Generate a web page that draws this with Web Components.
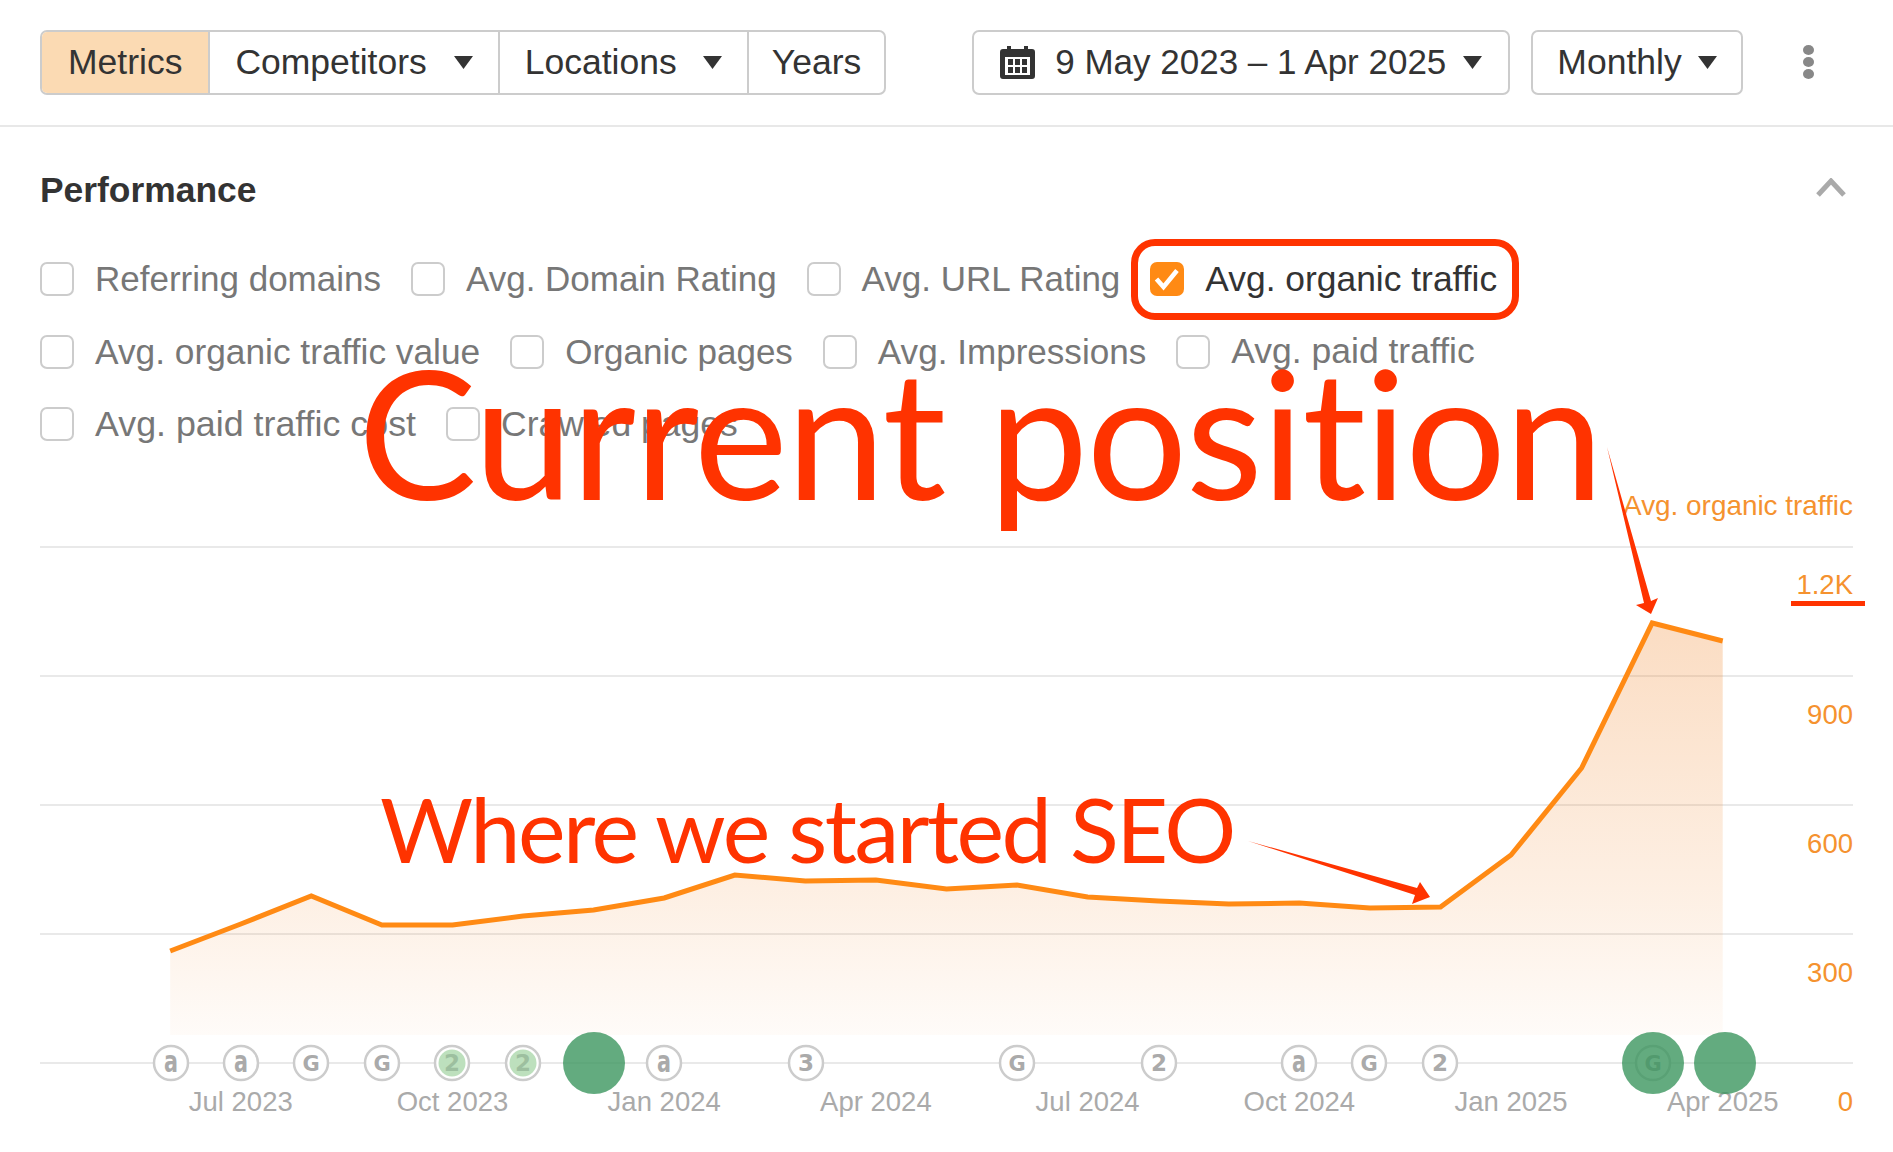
<!DOCTYPE html>
<html>
<head>
<meta charset="utf-8">
<title>Performance</title>
<style>
  html, body { margin: 0; background: #fff; }
  body { font-family: "Liberation Sans", Arial, sans-serif; color: #333; width: 1893px; height: 1152px; overflow: hidden; position: relative; }
</style>
</head>
<body>
<report-page>
  <top-bar slot="bar">
    <seg-group>
      <seg-btn active>Metrics</seg-btn>
      <seg-btn caret pad="25" gap="27">Competitors</seg-btn>
      <seg-btn caret pad="25">Locations</seg-btn>
      <seg-btn pad="23">Years</seg-btn>
    </seg-group>
    <seg-group class="date">
      <seg-btn caret calendar gap="17" size="35">9 May 2023 – 1 Apr 2025</seg-btn>
    </seg-group>
    <seg-group class="period">
      <seg-btn caret gap="16" pad="24">Monthly</seg-btn>
    </seg-group>
    <more-dots></more-dots>
  </top-bar>
  <perf-panel slot="panel" title="Performance">
    <metric-check size="35">Referring domains</metric-check>
    <metric-check size="35">Avg. Domain Rating</metric-check>
    <metric-check size="35">Avg. URL Rating</metric-check>
    <metric-check checked ringed size="35.4">Avg. organic traffic</metric-check>
    <metric-check size="35.3">Avg. organic traffic value</metric-check>
    <metric-check size="35">Organic pages</metric-check>
    <metric-check size="35.1">Avg. Impressions</metric-check>
    <metric-check size="35.5">Avg. paid traffic</metric-check>
    <metric-check size="35.8">Avg. paid traffic cost</metric-check>
    <metric-check size="35.5">Crawled pages</metric-check>
  </perf-panel>
  <traffic-chart slot="chart"></traffic-chart>
</report-page>
<chart-notes></chart-notes>

<script>
const ORANGE = '#ff8a14';

class ReportPage extends HTMLElement {
  constructor() {
    super();
    this.attachShadow({ mode: 'open' }).innerHTML = `
      <style>:host { display: block; }</style>
      <slot name="bar"></slot>
      <slot name="panel"></slot>
      <slot name="chart"></slot>`;
  }
}

class TopBar extends HTMLElement {
  constructor() {
    super();
    this.attachShadow({ mode: 'open' }).innerHTML = `
      <style>
        :host {
          display: flex; align-items: center; box-sizing: border-box;
          height: 127px; padding: 0 40px 1px;
          border-bottom: 2px solid #e8e8e8;
        }
        ::slotted(.date) { margin-left: 86px; }
        ::slotted(.period) { margin-left: 21px; }
        ::slotted(more-dots) { margin-left: 60px; }
      </style>
      <slot></slot>`;
  }
}

class SegGroup extends HTMLElement {
  constructor() {
    super();
    this.attachShadow({ mode: 'open' }).innerHTML = `
      <style>
        :host {
          display: inline-flex; height: 65px; box-sizing: border-box;
          border: 2px solid #ccc; border-radius: 7px; overflow: hidden; background: #fff;
        }
        ::slotted(seg-btn:not(:first-child)) { border-left: 2px solid #ccc; }
      </style>
      <slot></slot>`;
  }
}

class SegBtn extends HTMLElement {
  constructor() {
    super();
    this.attachShadow({ mode: 'open' });
  }
  connectedCallback() {
    const gap = this.getAttribute('gap') || 26;
    const pad = this.getAttribute('pad') || 26;
    const size = this.getAttribute('size') || 35.5;
    const caret = this.hasAttribute('caret')
      ? `<svg class="caret" style="margin-left:${gap}px" width="19" height="13" viewBox="0 0 19 13"><path d="M0 0H19L9.5 13Z" fill="#333"/></svg>` : '';
    const cal = this.hasAttribute('calendar')
      ? `<svg class="cal" width="35" height="33" viewBox="0 0 35 33">
           <path fill="#333" d="M3 3H7V0H11V3H24V0H28V3H32Q35 3 35 6V30Q35 33 32 33H3Q0 33 0 30V6Q0 3 3 3Z"/>
           <rect x="5" y="11" width="25" height="18" fill="#fff"/>
           <g fill="#333">
             <rect x="8" y="13" width="5" height="6"/><rect x="15" y="13" width="5" height="6"/><rect x="22" y="13" width="5" height="6"/>
             <rect x="8" y="21" width="5" height="6"/><rect x="15" y="21" width="5" height="6"/><rect x="22" y="21" width="5" height="6"/>
           </g>
         </svg>` : '';
    this.shadowRoot.innerHTML = `
      <style>
        :host {
          display: inline-flex; align-items: center; padding: 0 ${pad}px;
          font-size: ${size}px; color: #333; white-space: nowrap;
        }
        :host([active]) { background: #fbdab3; }
        .cal { margin-right: 20px; }
      </style>
      ${cal}<slot></slot>${caret}`;
  }
}

class MoreDots extends HTMLElement {
  constructor() {
    super();
    this.attachShadow({ mode: 'open' }).innerHTML = `
      <style>
        :host { display: flex; flex-direction: column; gap: 2px; }
        i { display: block; width: 11px; height: 10px; border-radius: 50%; background: #888; }
      </style>
      <i></i><i></i><i></i>`;
  }
}

class PerfPanel extends HTMLElement {
  constructor() {
    super();
    this.attachShadow({ mode: 'open' });
  }
  connectedCallback() {
    this.shadowRoot.innerHTML = `
      <style>
        :host { display: block; padding: 44px 40px 0; }
        header { display: flex; align-items: center; justify-content: space-between; height: 38px; }
        h2 { margin: 0; font-size: 35.4px; font-weight: 700; color: #333; }
        svg { margin: 0 7px 5px 0; }
        .checks { display: flex; flex-wrap: wrap; column-gap: 30px; row-gap: 34px; margin-top: 51px; }
      </style>
      <header>
        <h2>${this.getAttribute('title')}</h2>
        <svg width="30" height="19" viewBox="0 0 30 19"><path d="M2 17L15 3L28 17" fill="none" stroke="#aaa" stroke-width="5"/></svg>
      </header>
      <div class="checks"><slot></slot></div>`;
  }
}

class MetricCheck extends HTMLElement {
  constructor() {
    super();
    this.attachShadow({ mode: 'open' });
  }
  connectedCallback() {
    const tick = this.hasAttribute('checked')
      ? `<svg width="34" height="34" viewBox="0 0 34 34"><path d="M6.5 17L13.5 25L27 8.5" fill="none" stroke="#fff" stroke-width="4.6"/></svg>` : '';
    this.shadowRoot.innerHTML = `
      <style>
        :host {
          display: inline-flex; align-items: center; gap: 21px; position: relative;
          height: 38.5px; font-size: ${this.getAttribute('size') || 35}px; color: #777; white-space: nowrap;
        }
        :host([checked]) { color: #333; }
        .box {
          box-sizing: border-box; width: 34px; height: 34px; flex: none;
          border: 2px solid #ccc; border-radius: 7px; background: #fff;
        }
        :host([checked]) .box { border: 0; background: #ff8a14; }
        svg { display: block; }
        :host([ringed])::before {
          content: ""; position: absolute; left: -19px; right: -22px; top: -21px; bottom: -21px;
          border: 7px solid #ff3300; border-radius: 24px; pointer-events: none;
        }
      </style>
      <span class="box">${tick}</span><slot></slot>`;
  }
}

// chart data, one value per month, in page pixels
const LINE_Y = [951, 924, 896, 925, 925, 916, 910, 898, 875, 881, 880, 889, 885, 897, 901, 904, 903, 908, 907, 855, 768, 623, 641];
const STEP = 70.57, X0 = 170.2;
const GRID = [547, 676, 805, 934, 1063];
const Y_LABELS = [['1.2K', 594], ['900', 724], ['600', 853], ['300', 982], ['0', 1111]];
const X_LABELS = [['Jul 2023', 1], ['Oct 2023', 4], ['Jan 2024', 7], ['Apr 2024', 10], ['Jul 2024', 13], ['Oct 2024', 16], ['Jan 2025', 19], ['Apr 2025', 22]];
const MARKS = [['a', 171], ['a', 241], ['G', 311], ['G', 382], ['2', 452, 1], ['2', 523, 1], ['a', 664], ['3', 806], ['G', 1017], ['2', 1159], ['a', 1299], ['G', 1369], ['2', 1440], ['G', 1653]];
const BLOBS = [594, 1653, 1725];

function markText(t, x, green) {
  const fill = green ? '#9dbf9f' : '#aaa';
  // the "a" of the source badge is tall and narrow
  if (t === 'a') {
    return `<text class="mark" style="font-size:31px" x="${x - 7}" y="1072" textLength="14" lengthAdjust="spacingAndGlyphs" fill="${fill}">a</text>`;
  }
  const size = t === 'G' ? 21 : 23;
  return `<text class="mark" style="font-size:${size}px" x="${x}" y="1071" text-anchor="middle" fill="${fill}">${t}</text>`;
}

class TrafficChart extends HTMLElement {
  constructor() {
    super();
    const pts = LINE_Y.map((y, i) => `${(X0 + i * STEP).toFixed(1)},${y}`);
    const lastX = (X0 + 22 * STEP).toFixed(1);
    const grid = GRID.map(y => `<line x1="40" x2="1853" y1="${y}" y2="${y}" stroke="#e9e9e9" stroke-width="2"/>`).join('');
    const yTxt = Y_LABELS.map(([t, y]) => `<text x="1853" y="${y}" text-anchor="end" fill="#f5922f">${t}</text>`).join('');
    const xTxt = X_LABELS.map(([t, i]) => `<text x="${X0 + i * STEP}" y="1111" text-anchor="middle" fill="#aaa">${t}</text>`).join('');
    const marks = MARKS.map(([t, x, green]) => `
      <circle cx="${x}" cy="1063" r="17" fill="#fff" stroke="#ccc" stroke-width="2.5"/>
      ${green ? `<circle cx="${x}" cy="1063" r="13.5" fill="#bde0bd"/>` : ''}
      ${markText(t, x, green)}`).join('');
    const blobs = BLOBS.map(x => `<circle cx="${x}" cy="1063" r="31" fill="rgba(60,150,95,.8)"/>`).join('');
    this.attachShadow({ mode: 'open' }).innerHTML = `
      <style>
        :host { display: block; margin-top: 36px; }
        svg { display: block; font-family: "Liberation Sans", Arial, sans-serif; font-size: 27.5px; }
        .mark { font-family: "DejaVu Sans", sans-serif; font-weight: 700; }
      </style>
      <svg width="1893" height="672" viewBox="0 480 1893 672">
        <defs>
          <linearGradient id="area" gradientUnits="userSpaceOnUse" x1="0" x2="0" y1="623" y2="1035">
            <stop offset="0" stop-color="#f08020" stop-opacity=".27"/>
            <stop offset=".67" stop-color="#f08020" stop-opacity=".12"/>
            <stop offset="1" stop-color="#f08020" stop-opacity=".03"/>
          </linearGradient>
        </defs>
        ${grid}
        <polygon points="${X0},1035 ${pts.join(' ')} ${lastX},1035" fill="url(#area)"/>
        <polyline points="${pts.join(' ')}" fill="none" stroke="${ORANGE}" stroke-width="5" stroke-linejoin="miter"/>
        <text x="1853" y="515" text-anchor="end" fill="#f5922f" style="font-size:27.9px">Avg. organic traffic</text>
        ${yTxt}${xTxt}${marks}${blobs}
      </svg>`;
  }
}

// the red notes someone drew over the screenshot
class ChartNotes extends HTMLElement {
  constructor() {
    super();
    this.attachShadow({ mode: 'open' }).innerHTML = `
      <style>
        :host { position: absolute; inset: 0; pointer-events: none; color: #ff3300; font-family: Lato, sans-serif; font-variant-ligatures: none; }
        div { position: absolute; white-space: nowrap; line-height: 1; }
        .big { left: 358px; top: 342px; font-size: 178px; letter-spacing: -1.7px; }
        .small { left: 380px; top: 783px; font-size: 90px; letter-spacing: -2.5px; }
        svg { position: absolute; left: 0; top: 0; }
      </style>
      <div class="big">Current position</div>
      <div class="small">Where we started SEO</div>
      <svg width="1893" height="1152" viewBox="0 0 1893 1152" fill="#ff3300">
        <path d="M1607 447L1651 601L1658 598L1651 614L1636 605L1644 603Z"/>
        <path d="M1248 841L1417 888L1420 882L1430 897L1412 904L1415 895Z"/>
        <rect x="1791" y="601" width="74" height="5"/>
      </svg>`;
  }
}

customElements.define('report-page', ReportPage);
customElements.define('top-bar', TopBar);
customElements.define('seg-group', SegGroup);
customElements.define('seg-btn', SegBtn);
customElements.define('more-dots', MoreDots);
customElements.define('perf-panel', PerfPanel);
customElements.define('metric-check', MetricCheck);
customElements.define('traffic-chart', TrafficChart);
customElements.define('chart-notes', ChartNotes);
</script>
</body>
</html>
